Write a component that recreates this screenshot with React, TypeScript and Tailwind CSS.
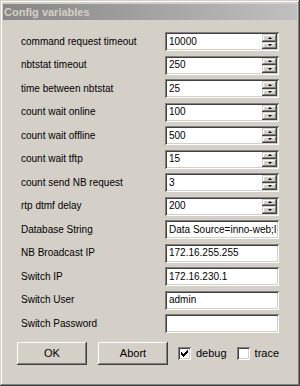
import React from "react";

const font = { fontFamily: '"Liberation Sans", Arial, sans-serif' };

function Spinner() {
  return (
    <div className="absolute right-[2px] top-[2px] bottom-[2px] w-[15px] flex flex-col">
      <div className="flex-1 bg-[#d4d0c8] flex items-center justify-center shadow-[inset_-1px_-1px_#404040,inset_1px_1px_#d4d0c8,inset_-2px_-2px_#808080,inset_2px_2px_#ffffff]">
        <div className="w-0 h-0 border-x-[2px] border-x-transparent border-b-[2px] border-b-black" />
      </div>
      <div className="flex-1 bg-[#d4d0c8] flex items-center justify-center shadow-[inset_-1px_-1px_#404040,inset_1px_1px_#d4d0c8,inset_-2px_-2px_#808080,inset_2px_2px_#ffffff]">
        <div className="w-0 h-0 border-x-[2px] border-x-transparent border-t-[2px] border-t-black" />
      </div>
    </div>
  );
}

function Field({ value, spin }: { value: string; spin?: boolean }) {
  return (
    <div className="relative w-[114px] h-[19px] bg-white shadow-[inset_1px_1px_#808080,inset_-1px_-1px_#ffffff,inset_2px_2px_#404040,inset_-2px_-2px_#d4d0c8] overflow-hidden">
      <div className="absolute left-[4px] top-0 bottom-0 right-[2px] flex items-center text-[10px] text-black whitespace-nowrap overflow-hidden leading-none">
        {value}
      </div>
      {spin && <Spinner />}
    </div>
  );
}

function Checkbox({ checked }: { checked?: boolean }) {
  return (
    <div className="relative w-[13px] h-[13px] bg-white shadow-[inset_1px_1px_#808080,inset_-1px_-1px_#ffffff,inset_2px_2px_#404040,inset_-2px_-2px_#d4d0c8]">
      {checked && (
        <svg className="absolute left-[3px] top-[3px]" width="7" height="7" viewBox="0 0 7 7" shapeRendering="crispEdges">
          <path d="M0 2h1v3h-1z M1 3h1v3h-1z M2 4h1v3h-1z M3 3h1v3h-1z M4 2h1v3h-1z M5 1h1v3h-1z M6 0h1v3h-1z" fill="#000" />
        </svg>
      )}
    </div>
  );
}

function Button({ label }: { label: string }) {
  return (
    <div className="w-[70px] h-[23px] bg-[#d4d0c8] flex items-center justify-center text-[11px] text-black shadow-[inset_-1px_-1px_#404040,inset_1px_1px_#ffffff,inset_-2px_-2px_#808080,inset_2px_2px_#d4d0c8]">
      {label}
    </div>
  );
}

const rows: { label: string; value: string; spin?: boolean }[] = [
  { label: "command request timeout", value: "10000", spin: true },
  { label: "nbtstat timeout", value: "250", spin: true },
  { label: "time between nbtstat", value: "25", spin: true },
  { label: "count wait online", value: "100", spin: true },
  { label: "count wait offline", value: "500", spin: true },
  { label: "count wait tftp", value: "15", spin: true },
  { label: "count send NB request", value: "3", spin: true },
  { label: "rtp dtmf delay", value: "200", spin: true },
  { label: "Database String", value: "Data Source=inno-web;I" },
  { label: "NB Broadcast IP", value: "172.16.255.255" },
  { label: "Switch IP", value: "172.16.230.1" },
  { label: "Switch User", value: "admin" },
  { label: "Switch Password", value: "" },
];

export default function App() {
  return (
    <div
      className="w-[300px] h-[386px] bg-[#d4d0c8] text-black shadow-[inset_-1px_-1px_#404040,inset_1px_1px_#d4d0c8,inset_-2px_-2px_#808080,inset_2px_2px_#ffffff] pt-[4px] px-[3px] flex flex-col overflow-hidden"
      style={font}
    >
      <div className="h-[16px] bg-gradient-to-r from-[#868686] to-[#c0c0c0] flex items-center pl-[1px]">
        <span className="text-[11px] font-bold text-[#d4d0c8] leading-none">Config variables</span>
      </div>
      <div className="mt-[12px] flex flex-col gap-[4.5px]">
        {rows.map((r) => (
          <div key={r.label} className="flex items-center h-[19px]">
            <div className="w-[162px] pl-[18px] text-[10px] whitespace-nowrap leading-none">{r.label}</div>
            <Field value={r.value} spin={r.spin} />
          </div>
        ))}
      </div>
      <div className="mt-[9px] flex items-center pl-[14px]">
        <Button label="OK" />
        <div className="w-[11px]" />
        <Button label="Abort" />
        <div className="ml-[10px] flex items-center">
          <Checkbox checked />
          <span className="ml-[5px] text-[11px]">debug</span>
        </div>
        <div className="ml-[10px] flex items-center">
          <Checkbox />
          <span className="ml-[5px] text-[11px]">trace</span>
        </div>
      </div>
    </div>
  );
}
